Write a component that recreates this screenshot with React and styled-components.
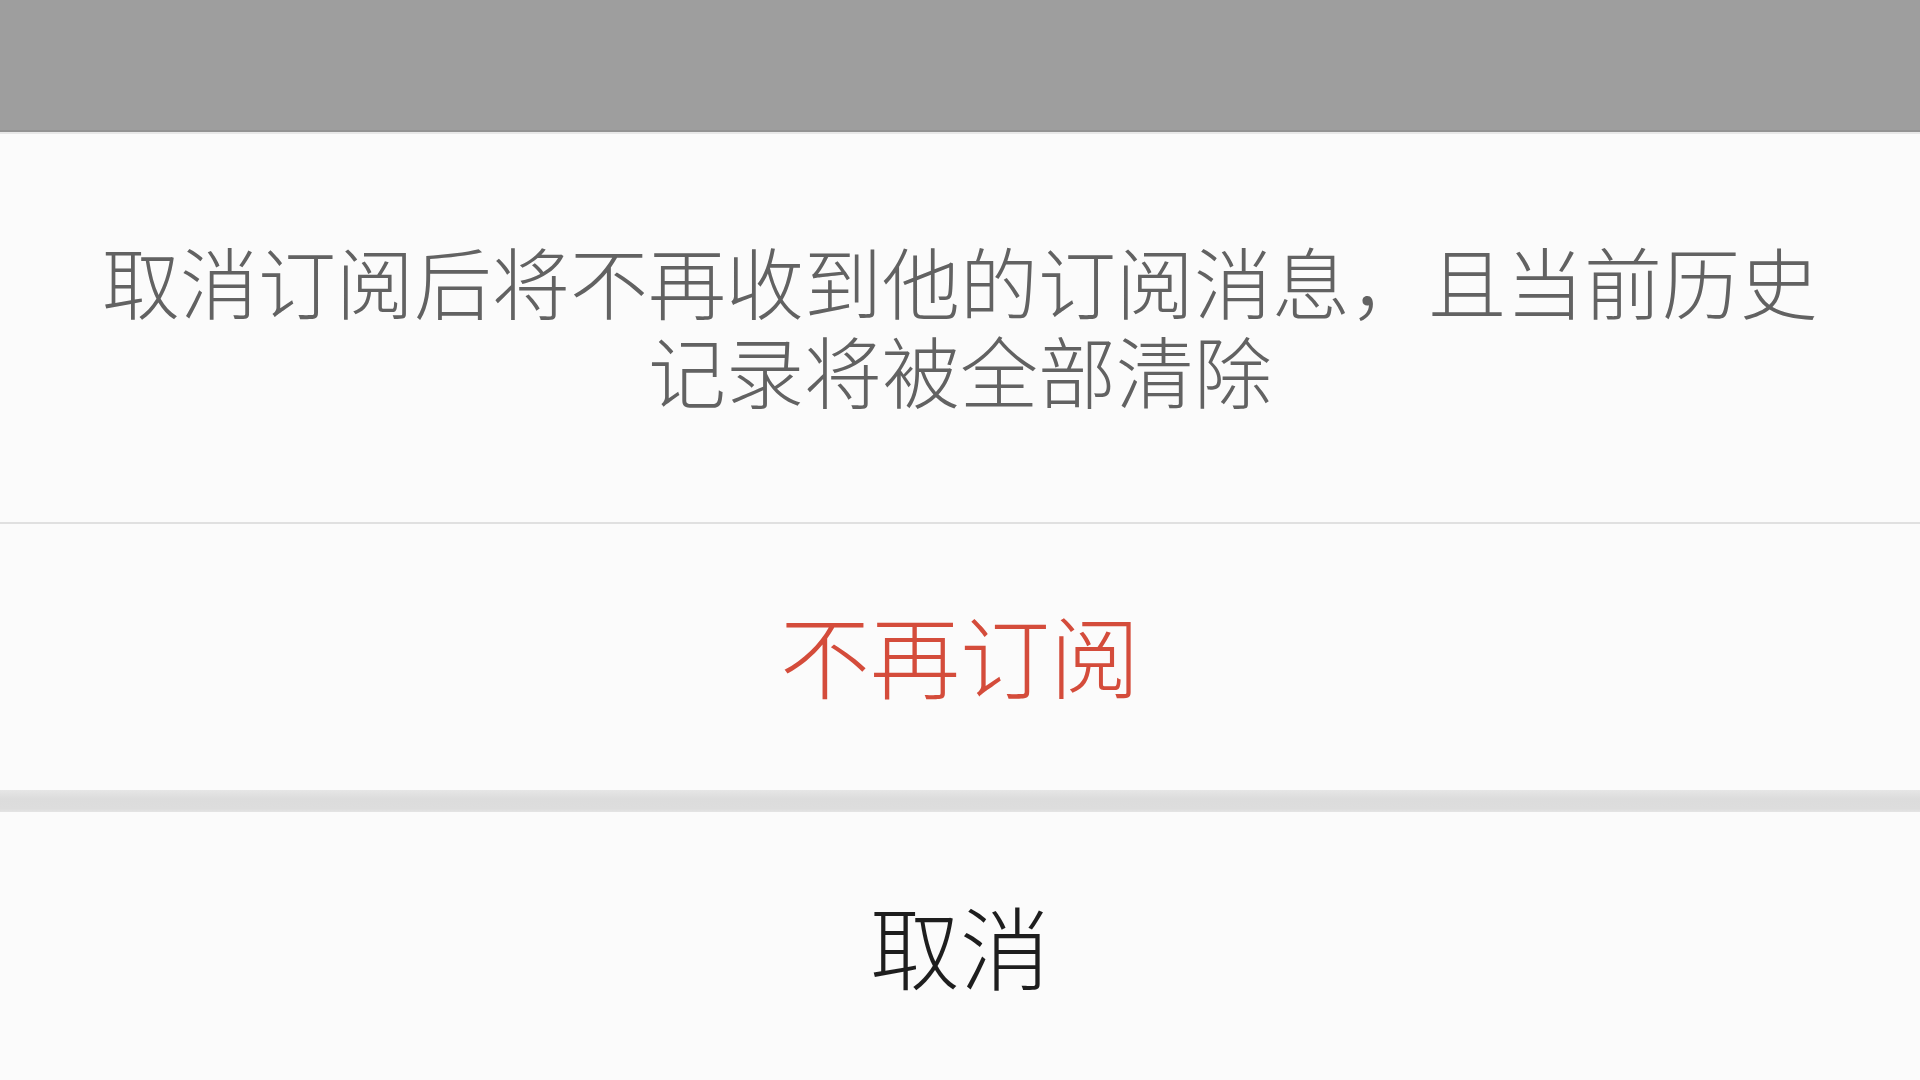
import React from 'react';
import styled, { createGlobalStyle } from 'styled-components';

const GlobalStyle = createGlobalStyle`
    html, body {
        margin: 0;
        padding: 0;
        background: #fbfbfb;
    }
    body {
        font-family: "Noto Sans CJK SC", "Noto Sans", sans-serif;
        overflow: hidden;
    }
`;

const Screen = styled.div`
    width: 1920px;
    height: 1080px;
    display: flex;
    flex-direction: column;
    overflow: hidden;
`;

const Backdrop = styled.div`
    height: 130px;
    flex-shrink: 0;
    background: #9e9e9e;
    border-bottom: 2px solid #939393;
`;

const Sheet = styled.div`
    flex: 1;
    display: flex;
    flex-direction: column;
    background: #fbfbfb;
    border-top: 2px solid #e8e8e8;
`;

const Message = styled.p`
    margin: 0;
    height: 390px;
    box-sizing: border-box;
    padding: 102px 100px 0;
    text-align: center;
    font-size: 78px;
    line-height: 89px;
    font-weight: 300;
    color: #626262;
    border-bottom: 2px solid #e0e0e0;
`;

// shift = positive pushes the label down, negative pulls it up
const ActionButton = styled.button`
    display: flex;
    align-items: center;
    justify-content: center;
    width: 100%;
    height: ${props => props.height}px;
    flex-shrink: 0;
    padding: ${props => Math.max(props.shift || 0, 0)}px 0 ${props => Math.max(-(props.shift || 0), 0)}px;
    margin: 0;
    border: none;
    background: transparent;
    font-family: inherit;
    font-size: 90px;
    font-weight: 300;
    line-height: 1;
    color: ${props => props.danger ? '#d44c3b' : '#1e1e1e'};
    cursor: pointer;
`;

const Gap = styled.div`
    height: 22px;
    flex-shrink: 0;
    background: linear-gradient(#e6e6e6, #dcdcdc 40%, #dddddd 85%, #e4e4e4);
`;

function UnsubscribeSheet() {
    return (
        <Sheet>
            <Message>取消订阅后将不再收到他的订阅消息，且当前历史记录将被全部清除</Message>
            <ActionButton danger height={266} shift={-8}>不再订阅</ActionButton>
            <Gap />
            <ActionButton height={264} shift={0}>取消</ActionButton>
        </Sheet>
    );
}

export default function App() {
    return (
        <Screen>
            <GlobalStyle />
            <Backdrop />
            <UnsubscribeSheet />
        </Screen>
    );
}
